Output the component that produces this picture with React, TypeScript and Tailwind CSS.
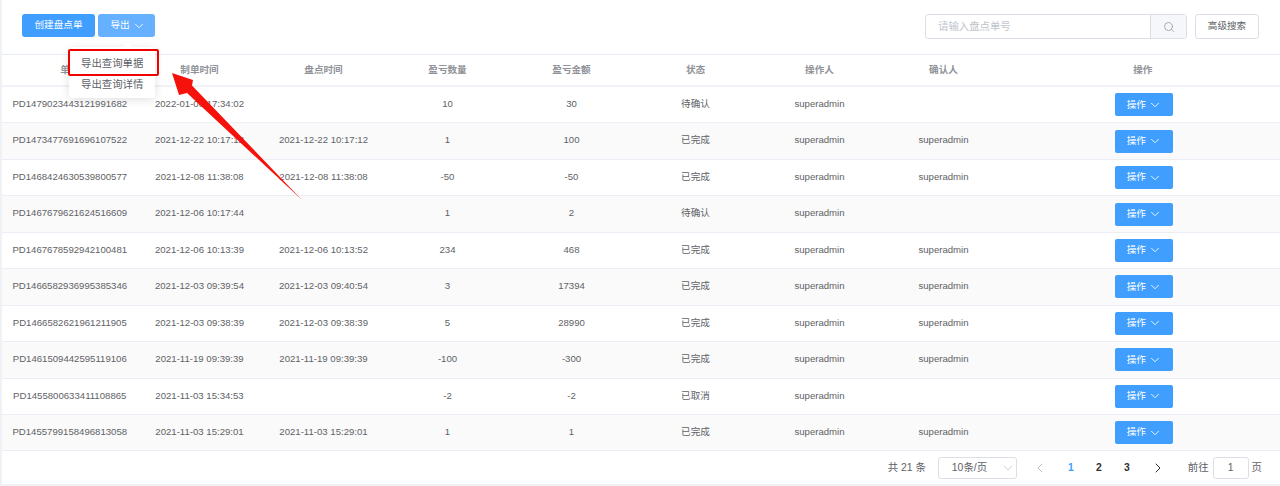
import { ChevronDown, ChevronLeft, ChevronRight, Search } from 'lucide-react';

const columns = ['w-[135.5px]', 'w-[124px]', 'w-[124px]', 'w-[124px]', 'w-[124px]', 'w-[124px]', 'w-[124px]', 'w-[124px]'];
const headers = ['单号', '制单时间', '盘点时间', '盈亏数量', '盈亏金额', '状态', '操作人', '确认人'];

const rows = [
  ['PD1479023443121991682', '2022-01-06 17:34:02', '', '10', '30', '待确认', 'superadmin', ''],
  ['PD1473477691696107522', '2021-12-22 10:17:12', '2021-12-22 10:17:12', '1', '100', '已完成', 'superadmin', 'superadmin'],
  ['PD1468424630539800577', '2021-12-08 11:38:08', '2021-12-08 11:38:08', '-50', '-50', '已完成', 'superadmin', 'superadmin'],
  ['PD1467679621624516609', '2021-12-06 10:17:44', '', '1', '2', '待确认', 'superadmin', ''],
  ['PD1467678592942100481', '2021-12-06 10:13:39', '2021-12-06 10:13:52', '234', '468', '已完成', 'superadmin', 'superadmin'],
  ['PD1466582936995385346', '2021-12-03 09:39:54', '2021-12-03 09:40:54', '3', '17394', '已完成', 'superadmin', 'superadmin'],
  ['PD1466582621961211905', '2021-12-03 09:38:39', '2021-12-03 09:38:39', '5', '28990', '已完成', 'superadmin', 'superadmin'],
  ['PD1461509442595119106', '2021-11-19 09:39:39', '2021-11-19 09:39:39', '-100', '-300', '已完成', 'superadmin', 'superadmin'],
  ['PD1455800633411108865', '2021-11-03 15:34:53', '', '-2', '-2', '已取消', 'superadmin', ''],
  ['PD1455799158496813058', '2021-11-03 15:29:01', '2021-11-03 15:29:01', '1', '1', '已完成', 'superadmin', 'superadmin'],
];

export default function App() {
  return (
    <div className="relative h-[486px] w-[1280px] overflow-hidden bg-white border-l-2 border-[#eef2f7] font-['Liberation_Sans','Noto_Sans_CJK_SC',sans-serif] text-[9.6px] text-[#606266]">
      {/* Toolbar */}
      <div className="flex h-[55px] items-start justify-between border-b border-[#e8edf3] pl-5 pr-[21px] pt-[14px]">
        <div className="flex gap-[3px]">
          <button className="h-[23px] w-[73px] rounded-[3px] bg-[#409eff] text-white">创建盘点单</button>
          <button className="flex h-[23px] w-[57px] items-center justify-center gap-[2px] rounded-[3px] bg-[#66b1ff] pl-[3px] text-white">
            导出
            <ChevronDown className="h-[14px] w-[14px]" strokeWidth={1.5} />
          </button>
        </div>
        <div className="flex gap-2">
          <div className="flex h-[25px] w-[262px] rounded-[3px] border border-[#dcdfe6]">
            <div className="flex flex-1 items-center pl-3 text-[10.4px] text-[#c0c4cc]">请输入盘点单号</div>
            <div className="flex w-9 items-center justify-center border-l border-[#dcdfe6] bg-[#f5f7fa] text-[#909399]">
              <Search className="h-3 w-3" strokeWidth={1.5} />
            </div>
          </div>
          <button className="h-[25px] w-[64px] rounded-[3px] border border-[#dcdfe6] text-[#606266]">高级搜索</button>
        </div>
      </div>

      {/* Table header */}
      <div className="flex h-[32px] items-center border-b-2 border-[#f0f2f7] font-bold text-[#909399]">
        {headers.map((h, i) => (
          <div key={h} className={`${columns[i]} text-center`}>{h}</div>
        ))}
        <div className="flex-1 text-center">操作</div>
      </div>

      {/* Table rows */}
      {rows.map((row, r) => (
        <div key={row[0]} className={`flex h-[36.44px] items-center border-b border-[#ebeef5] ${r % 2 === 1 ? 'bg-[#fafafa]' : 'bg-white'}`}>
          {row.map((cell, i) => (
            <div key={i} className={`${columns[i]} pb-px text-center`}>{cell}</div>
          ))}
          <div className="flex flex-1 justify-center pl-[3px]">
            <button className="flex h-[23px] w-[58px] items-center justify-center gap-[2px] rounded-[2px] bg-[#409eff] text-white">
              操作
              <ChevronDown className="h-[14px] w-[14px]" strokeWidth={1.5} />
            </button>
          </div>
        </div>
      ))}

      {/* Pagination */}
      <div className="flex h-[35px] items-center justify-end border-b-2 border-[#eef2f7] pr-[18px] text-[10.4px]">
        <span className="mr-3">共 21 条</span>
        <div className="mr-[15px] flex h-[22px] w-[79px] items-center justify-between rounded-[3px] border border-[#dcdfe6] pl-[13px] pr-px">
          10条/页
          <ChevronDown className="h-[14px] w-[14px] text-[#c0c4cc]" strokeWidth={1.5} />
        </div>
        <ChevronLeft className="mr-[9px] h-4 w-4 text-[#c0c4cc]" strokeWidth={1.5} />
        <div className="flex items-center font-bold text-[#303133]">
          <span className="w-7 text-center text-[#409eff]">1</span>
          <span className="w-7 text-center">2</span>
          <span className="w-7 text-center">3</span>
        </div>
        <ChevronRight className="ml-[9px] mr-[22px] h-4 w-4 text-[#303133]" strokeWidth={1.5} />
        <span>前往</span>
        <div className="ml-1 mr-[3px] flex h-[22px] w-[36px] items-center justify-center rounded-[3px] border border-[#dcdfe6]">1</div>
        <span>页</span>
      </div>

      {/* Export dropdown */}
      <div className="absolute left-[67px] top-[47px] z-10 flex h-[51px] w-[86px] flex-col justify-center gap-[5px] rounded-[3px] bg-white pl-3 pt-1 text-[10.4px] shadow-[0_2px_10px_rgba(0,0,0,0.12)]">
        <div className="absolute -top-[3px] left-[55px] h-[7px] w-[7px] rotate-45 bg-white" />
        <div>导出查询单据</div>
        <div>导出查询详情</div>
      </div>

      {/* Red annotation box */}
      <div className="absolute left-[66px] top-[49px] z-20 h-[27px] w-[91px] rounded-[2px] border-2 border-[#f00000]" />

      {/* Red annotation arrow */}
      <svg className="absolute -left-[2px] top-0 z-20" width="1280" height="486" viewBox="0 0 1280 486">
        <polygon points="172,73 193,80 192,85.5 302,200 187,93 179,95" fill="#f5120c" />
      </svg>
    </div>
  );
}
